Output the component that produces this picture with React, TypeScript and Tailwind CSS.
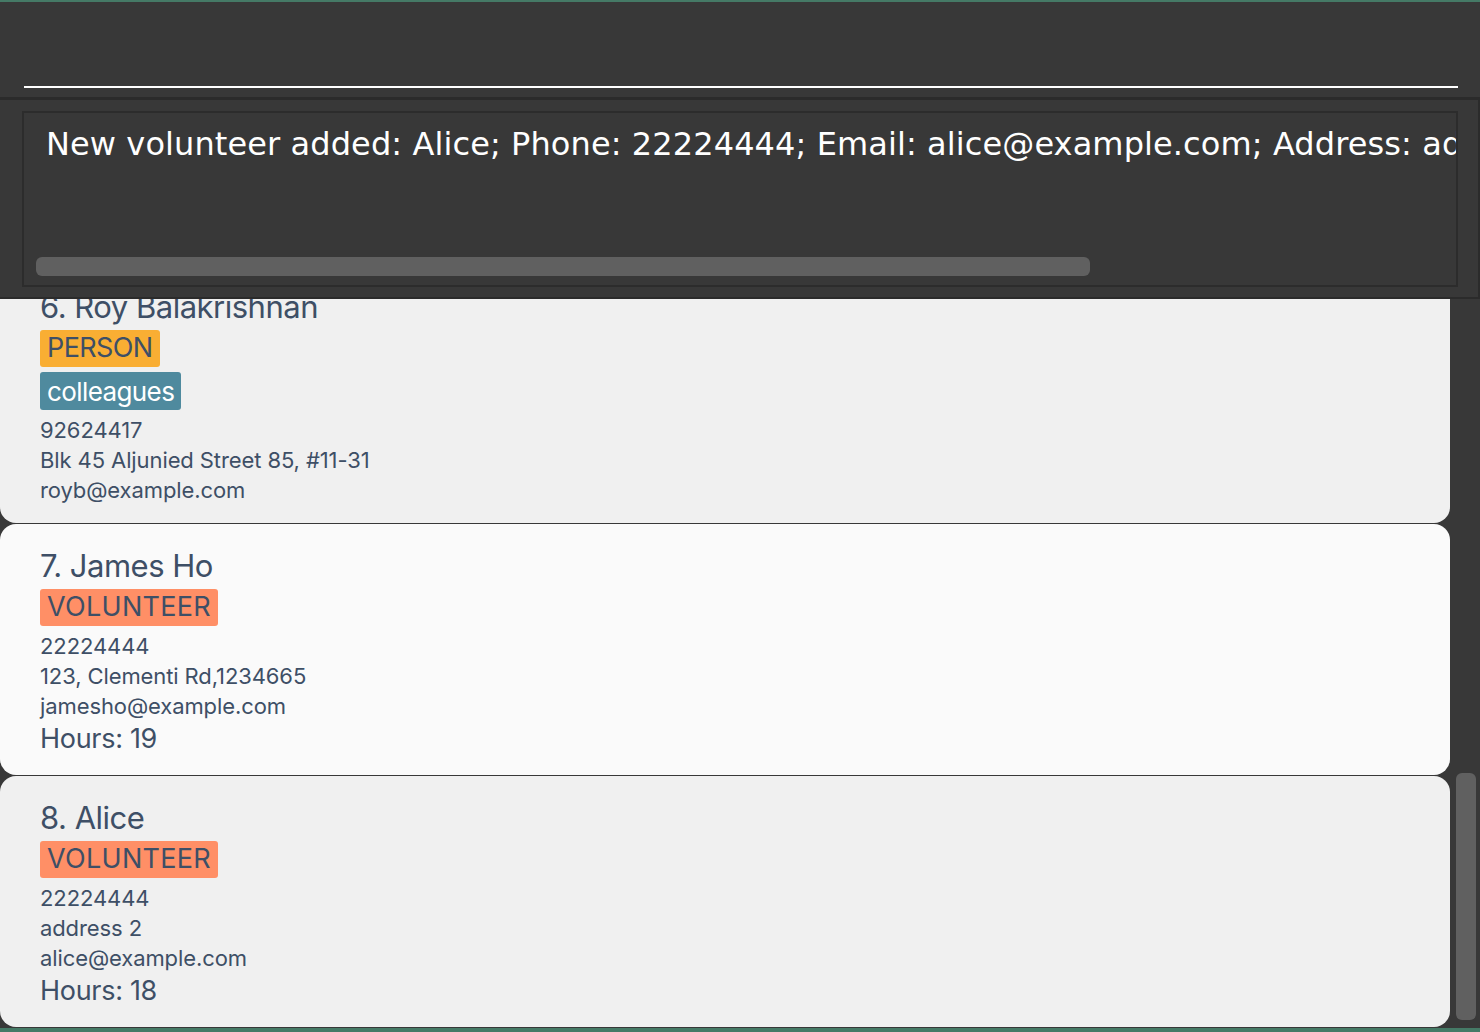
type Person = {
  index: number;
  name: string;
  role: "PERSON" | "VOLUNTEER";
  tags: string[];
  phone: string;
  address: string;
  email: string;
  hours?: number;
};

const people: Person[] = [
  {
    index: 6,
    name: "Roy Balakrishnan",
    role: "PERSON",
    tags: ["colleagues"],
    phone: "92624417",
    address: "Blk 45 Aljunied Street 85, #11-31",
    email: "royb@example.com",
  },
  {
    index: 7,
    name: "James Ho",
    role: "VOLUNTEER",
    tags: [],
    phone: "22224444",
    address: "123, Clementi Rd,1234665",
    email: "jamesho@example.com",
    hours: 19,
  },
  {
    index: 8,
    name: "Alice",
    role: "VOLUNTEER",
    tags: [],
    phone: "22224444",
    address: "address 2",
    email: "alice@example.com",
    hours: 18,
  },
];

function PersonCard({ person, odd }: { person: Person; odd: boolean }) {
  return (
    <div
      className={`rounded-2xl pl-10 pt-6 pb-[18px] text-[#3e4f66] ${
        odd ? "bg-[#f0f0f0]" : "bg-[#fafafa]"
      }`}
    >
      <p className="text-[31px] leading-[36px] tracking-[-0.5px]">
        {person.index}. {person.name}
      </p>
      <div className="mt-[5px] flex flex-col items-start gap-[5px]">
        <span
          className={`rounded-[3px] px-[7px] h-[37px] flex items-center text-[27px] ${
            person.role === "PERSON"
              ? "bg-[#f9ae33] tracking-[-0.6px]"
              : "bg-[#ff8f66] tracking-[0.3px]"
          }`}
        >
          {person.role}
        </span>
        {person.tags.map((t) => (
          <span
            key={t}
            className="rounded-[3px] px-[7px] h-[38px] flex items-center text-[26px] tracking-[-0.6px] text-white bg-[#4f8a9e]"
          >
            {t}
          </span>
        ))}
      </div>
      <div className="mt-[5px] text-[22px] leading-[30px] tracking-[-0.1px]">
        <p>{person.phone}</p>
        <p>{person.address}</p>
        <p>{person.email}</p>
      </div>
      {person.hours !== undefined && (
        <p className="text-[27px] leading-[36px] tracking-[-0.3px]">Hours: {person.hours}</p>
      )}
    </div>
  );
}

export default function App() {
  return (
    <div className="w-[1480px] h-[1032px] bg-[#457a66] pt-[2px] pb-[4px] overflow-hidden font-['Inter','Noto_Sans',sans-serif]">
      <div className="h-full flex flex-col bg-[#383838]">
        {/* Command box */}
        <div className="h-[98px] shrink-0 px-6 pt-[84px] border-b-[3px] border-[#2b2b2b]">
          <div className="h-[2px] w-[1434px] bg-white" />
        </div>

        {/* Result display */}
        <div className="h-[199px] shrink-0 pl-[22px] pr-[20px] pt-[11px] border-b-[2px] border-r-[2px] border-[#2b2b2b]">
          <div className="h-[176px] w-[1436px] border-2 border-[#2c2c2c] overflow-hidden flex flex-col">
            <p className="pl-[22px] pt-[13px] text-[32px] leading-[36px] tracking-[0.1px] text-white whitespace-nowrap font-['DejaVu_Sans','Verdana',sans-serif]">
              New volunteer added: Alice; Phone: 22224444; Email: alice@example.com; Address: address 2; Hours: 18
            </p>
            <div className="mt-auto mb-[9px] ml-[12px] h-[19px] w-[1054px] rounded-md bg-[#606060]" />
          </div>
        </div>

        {/* Person list */}
        <div className="flex-1 flex min-h-0">
          <div className="w-[1450px] overflow-hidden">
            <div className="-mt-[34px] flex flex-col gap-px">
              {people.map((p, i) => (
                <PersonCard key={p.index} person={p} odd={i % 2 === 0} />
              ))}
            </div>
          </div>
          <div className="flex-1 flex flex-col justify-end pl-[6px] pr-[4px] pb-[8px]">
            <div className="h-[247px] rounded-md bg-[#606060]" />
          </div>
        </div>
      </div>
    </div>
  );
}
